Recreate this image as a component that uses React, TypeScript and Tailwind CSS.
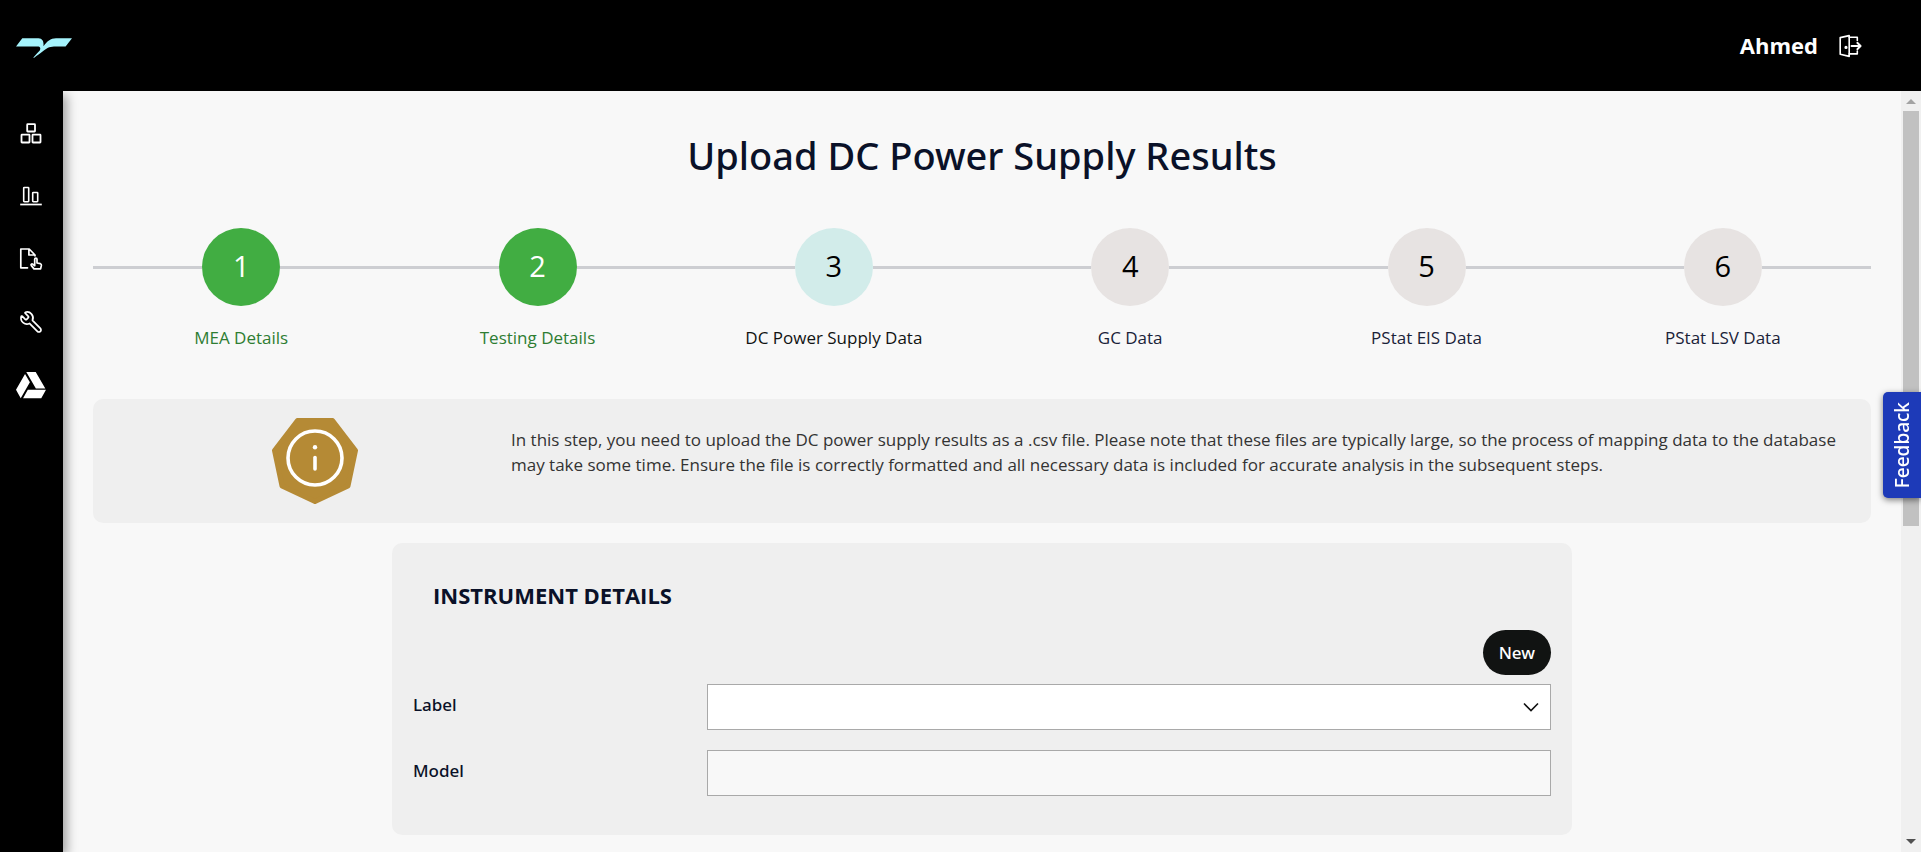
import { Wrench } from 'lucide-react';
import { FaGoogleDrive } from 'react-icons/fa';

function Logo() {
  return (
    <svg viewBox="0 0 56 20" className="h-5 w-14" fill="#a5f3fc" aria-hidden="true">
      <path d="M6.3 .3H22.5C26 .3 28 3 27.500 8.200C31 3.400 34.500 .3 40 .3H56L49.600 8.500H38C33 8.700 30.500 10.500 27.500 12.800C24 15.500 21 17.500 18.200 19.800H17.200C19.500 16.800 22 14.500 23.800 12.500C24.800 10.400 24.500 8.500 21.500 8.500H0Z" />
    </svg>
  );
}

function LogoutIcon() {
  return (
    <svg viewBox="0 0 24 24" className="size-6" fill="none" stroke="#fff" strokeWidth="1.6" strokeLinejoin="round" strokeLinecap="round" aria-hidden="true">
      <path d="M2.2 3.600L11.200 1.600V22.400L2.200 20.200Z" />
      <path d="M11.200 3.300H19.300V6.500M11.200 19.900H19.300V17" />
      <path d="M13.500 12H22.200M19.300 8.800L22.600 12L19.300 15.200" strokeWidth="1.900" />
      <circle cx="8" cy="13.400" r=".8" fill="#fff" />
    </svg>
  );
}

function BoxesIcon() {
  return (
    <svg viewBox="0 0 24 24" className="size-6" fill="none" stroke="#fff" strokeWidth="1.800" aria-hidden="true">
      <rect x="8.200" y="3.200" width="7.800" height="7.300" rx=".5" />
      <rect x="2.500" y="13.700" width="8" height="7.800" rx=".5" />
      <rect x="13.500" y="13.700" width="8" height="7.800" rx=".5" />
    </svg>
  );
}

function ChartIcon() {
  return (
    <svg viewBox="0 0 24 24" className="size-6" fill="none" stroke="#fff" strokeWidth="1.600" aria-hidden="true">
      <rect x="4.700" y="3.500" width="5" height="14.200" rx=".6" />
      <rect x="13.700" y="8.500" width="5" height="9.200" rx=".6" />
      <path d="M1.200 20.500H22.800" strokeWidth="1.700" />
    </svg>
  );
}

function FileIcon() {
  return (
    <svg viewBox="0 0 24 24" className="size-6" fill="none" stroke="#fff" strokeWidth="1.700" strokeLinejoin="round" strokeLinecap="round" aria-hidden="true">
      <path d="M8.500 20.800H1.800V2H10.200L16 8V8.800M9.900 2.200V8H15.800" />
      <path d="M15.700 17V12.300C15.700 10.800 18 10.800 18 12.300V16L21.400 16.700C22.300 17 22.500 17.600 22.400 18.400L21.600 21.900H15L12.200 18.400C11.600 17.400 12.800 16.500 13.700 17.200L15.700 18.700Z" />
    </svg>
  );
}

function InfoBadge() {
  return (
    <svg viewBox="0 0 86 86" className="size-[86px]" aria-hidden="true">
      <path d="M25.500 2.500H60.500L83.500 32.500L76 68L43 83.500L10 68L2.500 32.500Z" fill="#b58a35" stroke="#b58a35" strokeWidth="5" strokeLinejoin="round" />
      <circle cx="43" cy="40" r="27" fill="none" stroke="#fff" strokeWidth="3.600" />
      <circle cx="43" cy="29.300" r="2.200" fill="#fff" />
      <path d="M43 39.500V51" stroke="#fff" strokeWidth="3.600" strokeLinecap="round" />
    </svg>
  );
}

const NAV = [
  { label: 'Products', icon: <BoxesIcon /> },
  { label: 'Charts', icon: <ChartIcon /> },
  { label: 'Files', icon: <FileIcon /> },
  { label: 'Tools', icon: <Wrench className="size-6 -scale-x-100" strokeWidth={1.7} /> },
  { label: 'Drive', icon: <FaGoogleDrive className="size-[30px]" /> },
];

const STEPS = [
  { label: 'MEA Details', circle: 'bg-[#41ad42] text-white', text: 'text-[#2e7d32]' },
  { label: 'Testing Details', circle: 'bg-[#41ad42] text-white', text: 'text-[#2e7d32]' },
  { label: 'DC Power Supply Data', circle: 'bg-[#d2ecea] text-black', text: 'text-[#111312]' },
  { label: 'GC Data', circle: 'bg-[#e7e3e2] text-black', text: 'text-[#1a2238]' },
  { label: 'PStat EIS Data', circle: 'bg-[#e7e3e2] text-black', text: 'text-[#1a2238]' },
  { label: 'PStat LSV Data', circle: 'bg-[#e7e3e2] text-black', text: 'text-[#1a2238]' },
];

function Stepper() {
  return (
    <ol className="grid grid-cols-6">
      {STEPS.map((step, i) => (
        <li key={step.label} className="flex flex-col items-center">
          <div className="flex w-full items-center">
            <span className="h-[3px] flex-1 bg-[#cdced2]" />
            <span className={'flex size-[78px] items-center justify-center rounded-full pb-0.5 text-[29px] ' + step.circle}>{i + 1}</span>
            <span className="h-[3px] flex-1 bg-[#cdced2]" />
          </div>
          <span className={'mt-5 text-[17px] leading-6 ' + step.text}>{step.label}</span>
        </li>
      ))}
    </ol>
  );
}

function Scrollbar() {
  return (
    <div className="flex w-5 shrink-0 flex-col items-center bg-[#f0f0f0] pt-2 pb-2" aria-hidden="true">
      <svg viewBox="0 0 10 5" className="h-[5px] w-[10px]" fill="#a3a3a3"><path d="M5 0L10 5H0Z" /></svg>
      <div className="mt-[7px] h-[415px] w-4 bg-[#c1c1c1]" />
      <svg viewBox="0 0 10 5" className="mt-auto h-[5px] w-[10px]" fill="#505050"><path d="M5 5L10 0H0Z" /></svg>
    </div>
  );
}

export default function App() {
  return (
    <div className="flex min-h-screen flex-col bg-black font-['Open_Sans',sans-serif] text-[#0a1128]">
      <header className="flex h-[91px] items-center justify-between pr-[59px] pl-4">
        <a href="#home" aria-label="Home" className="pt-1"><Logo /></a>
        <div className="flex items-center gap-5">
          <span className="text-[22px] font-bold text-white">Ahmed</span>
          <button type="button" aria-label="Log out"><LogoutIcon /></button>
        </div>
      </header>

      <div className="flex flex-1">
        <nav className="z-10 w-[63px] shrink-0 bg-black pt-[10px] pr-px text-white shadow-[4px_4px_10px_rgba(0,0,0,0.35)] [clip-path:inset(0_-20px_0_0)]">
          {NAV.map((item) => (
            <a key={item.label} href={'#' + item.label.toLowerCase()} aria-label={item.label} className="flex h-[63px] items-center justify-center">
              {item.icon}
            </a>
          ))}
        </nav>

        <main className="min-w-0 flex-1 bg-[#f8f8f8] px-[30px] pt-9 pb-4">
          <h1 className="text-center font-['Noto_Sans',sans-serif] text-[38px] leading-[57px] font-medium">Upload DC Power Supply Results</h1>
          <div className="mt-11"><Stepper /></div>

          <section className="mt-[49px] flex h-[124px] rounded-[10px] bg-[#efefef] pr-6">
            <div className="w-[418px] shrink-0 pt-[19px] pl-[179px]"><InfoBadge /></div>
            <p className="pt-7 text-[17px] leading-[25px] text-[#333]">
              In this step, you need to upload the DC power supply results as a .csv file. Please note that these files are typically large, so the process of mapping data to the database may take some time. Ensure the file is correctly formatted and all necessary data is included for accurate analysis in the subsequent steps.
            </p>
          </section>

          <form className="mx-auto mt-5 w-[1180px] max-w-full rounded-[10px] bg-[#efefef] px-[21px] pt-9 pb-[39px]">
            <h2 className="px-5 text-[22px] leading-8 font-bold uppercase">Instrument Details</h2>
            <div className="mt-[19px] flex justify-end">
              <button type="button" className="h-[45px] rounded-full bg-[#111312] px-4 font-['Noto_Sans',sans-serif] text-[17px] font-medium text-white">New</button>
            </div>
            <div className="mt-[9px] grid grid-cols-[294px_1fr] gap-y-5">
              <label htmlFor="label" className="pt-[9px] font-['Noto_Sans',sans-serif] text-[17px] leading-6 font-medium">Label</label>
              <div className="grid">
                <select id="label" className="col-start-1 row-start-1 h-[46px] appearance-none border border-[#a9a9a9] bg-white px-3 text-[17px]">
                  <option></option>
                </select>
                <svg viewBox="0 0 16 10" className="pointer-events-none col-start-1 row-start-1 mr-3 h-[10px] w-4 self-center justify-self-end" fill="none" stroke="#111" strokeWidth="1.600" aria-hidden="true">
                  <path d="M1 1.500L8 8.500L15 1.500" />
                </svg>
              </div>
              <label htmlFor="model" className="pt-[9px] font-['Noto_Sans',sans-serif] text-[17px] leading-6 font-medium">Model</label>
              <input id="model" disabled className="h-[46px] border border-[#a9a9a9] bg-[#f8f8f8] px-3 text-[17px]" />
            </div>
          </form>
        </main>

        <Scrollbar />
      </div>

      <button type="button" className="fixed top-[392px] right-0 z-20 flex h-[106px] w-[38px] items-center justify-center rounded-l-[5px] bg-[#1d3ab8] text-white shadow-[0_2px_6px_rgba(0,0,0,0.5)]">
        <span className="rotate-180 font-['Noto_Sans',sans-serif] text-[19px] leading-6 font-medium [writing-mode:vertical-rl]">Feedback</span>
      </button>
    </div>
  );
}
